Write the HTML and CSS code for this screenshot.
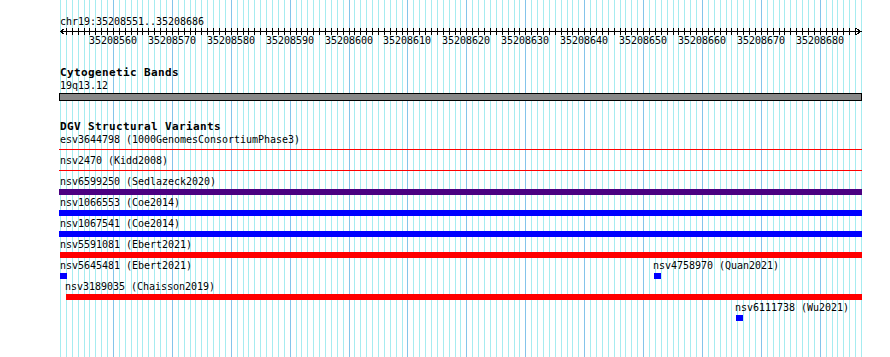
FILE: index.html
```html
<!DOCTYPE html>
<html>
<head>
<meta charset="utf-8">
<link rel="stylesheet" href="styles.css">
</head>
<body>
<div class="page">
  <svg class="guides" width="890" height="357">
    <path class="light" d="M60.5 0v357M66.5 0v357M72.5 0v357M78.5 0v357M84.5 0v357M89.5 0v357M95.5 0v357M101.5 0v357M107.5 0v357M119.5 0v357M125.5 0v357M131.5 0v357M137.5 0v357M142.5 0v357M148.5 0v357M154.5 0v357M160.5 0v357M166.5 0v357M178.5 0v357M184.5 0v357M190.5 0v357M195.5 0v357M201.5 0v357M207.5 0v357M213.5 0v357M219.5 0v357M225.5 0v357M237.5 0v357M243.5 0v357M248.5 0v357M254.5 0v357M260.5 0v357M266.5 0v357M272.5 0v357M278.5 0v357M284.5 0v357M296.5 0v357M301.5 0v357M307.5 0v357M313.5 0v357M319.5 0v357M325.5 0v357M331.5 0v357M337.5 0v357M343.5 0v357M354.5 0v357M360.5 0v357M366.5 0v357M372.5 0v357M378.5 0v357M384.5 0v357M390.5 0v357M396.5 0v357M402.5 0v357M413.5 0v357M419.5 0v357M425.5 0v357M431.5 0v357M437.5 0v357M443.5 0v357M449.5 0v357M455.5 0v357M460.5 0v357M472.5 0v357M478.5 0v357M484.5 0v357M490.5 0v357M496.5 0v357M502.5 0v357M508.5 0v357M514.5 0v357M519.5 0v357M531.5 0v357M537.5 0v357M543.5 0v357M549.5 0v357M555.5 0v357M561.5 0v357M567.5 0v357M572.5 0v357M578.5 0v357M590.5 0v357M596.5 0v357M602.5 0v357M608.5 0v357M614.5 0v357M620.5 0v357M625.5 0v357M631.5 0v357M637.5 0v357M649.5 0v357M655.5 0v357M661.5 0v357M667.5 0v357M673.5 0v357M678.5 0v357M684.5 0v357M690.5 0v357M696.5 0v357M708.5 0v357M714.5 0v357M720.5 0v357M726.5 0v357M731.5 0v357M737.5 0v357M743.5 0v357M749.5 0v357M755.5 0v357M767.5 0v357M773.5 0v357M779.5 0v357M784.5 0v357M790.5 0v357M796.5 0v357M802.5 0v357M808.5 0v357M814.5 0v357M826.5 0v357M832.5 0v357M837.5 0v357M843.5 0v357M849.5 0v357M855.5 0v357M861.5 0v357"/>
    <path class="dark" d="M113.5 0v357M172.5 0v357M231.5 0v357M290.5 0v357M349.5 0v357M407.5 0v357M466.5 0v357M525.5 0v357M584.5 0v357M643.5 0v357M702.5 0v357M761.5 0v357M820.5 0v357"/>
  </svg>

  <div class="content">
    <div class="pos">chr19:35208551..35208686</div>
    <svg class="axis" width="802" height="7">
      <path class="ax" d="M0 3.5H802"/>
      <path class="ax" d="M6.5 0v7M12.5 0v7M18.5 0v7M24.5 0v7M29.5 0v7M35.5 0v7M41.5 0v7M47.5 0v7M53.5 0v7M59.5 0v7M65.5 0v7M71.5 0v7M77.5 0v7M82.5 0v7M88.5 0v7M94.5 0v7M100.5 0v7M106.5 0v7M112.5 0v7M118.5 0v7M124.5 0v7M130.5 0v7M135.5 0v7M141.5 0v7M147.5 0v7M153.5 0v7M159.5 0v7M165.5 0v7M171.5 0v7M177.5 0v7M183.5 0v7M188.5 0v7M194.5 0v7M200.5 0v7M206.5 0v7M212.5 0v7M218.5 0v7M224.5 0v7M230.5 0v7M236.5 0v7M241.5 0v7M247.5 0v7M253.5 0v7M259.5 0v7M265.5 0v7M271.5 0v7M277.5 0v7M283.5 0v7M289.5 0v7M294.5 0v7M300.5 0v7M306.5 0v7M312.5 0v7M318.5 0v7M324.5 0v7M330.5 0v7M336.5 0v7M342.5 0v7M347.5 0v7M353.5 0v7M359.5 0v7M365.5 0v7M371.5 0v7M377.5 0v7M383.5 0v7M389.5 0v7M395.5 0v7M400.5 0v7M406.5 0v7M412.5 0v7M418.5 0v7M424.5 0v7M430.5 0v7M436.5 0v7M442.5 0v7M448.5 0v7M454.5 0v7M459.5 0v7M465.5 0v7M471.5 0v7M477.5 0v7M483.5 0v7M489.5 0v7M495.5 0v7M501.5 0v7M507.5 0v7M512.5 0v7M518.5 0v7M524.5 0v7M530.5 0v7M536.5 0v7M542.5 0v7M548.5 0v7M554.5 0v7M560.5 0v7M565.5 0v7M571.5 0v7M577.5 0v7M583.5 0v7M589.5 0v7M595.5 0v7M601.5 0v7M607.5 0v7M613.5 0v7M618.5 0v7M624.5 0v7M630.5 0v7M636.5 0v7M642.5 0v7M648.5 0v7M654.5 0v7M660.5 0v7M666.5 0v7M671.5 0v7M677.5 0v7M683.5 0v7M689.5 0v7M695.5 0v7M701.5 0v7M707.5 0v7M713.5 0v7M719.5 0v7M724.5 0v7M730.5 0v7M736.5 0v7M742.5 0v7M748.5 0v7M754.5 0v7M760.5 0v7M766.5 0v7M772.5 0v7M777.5 0v7M783.5 0v7M789.5 0v7M795.5 0v7"/>
      <path class="arrow" d="M4.5 0.5L0.5 3.5L4.5 6.5M796.5 0.5L800.5 3.5L796.5 6.5"/>
    </svg>
    <div class="scale">
      <span class="num" style="left:53px">35208560</span>
      <span class="num" style="left:112px">35208570</span>
      <span class="num" style="left:171px">35208580</span>
      <span class="num" style="left:230px">35208590</span>
      <span class="num" style="left:289px">35208600</span>
      <span class="num" style="left:347px">35208610</span>
      <span class="num" style="left:406px">35208620</span>
      <span class="num" style="left:465px">35208630</span>
      <span class="num" style="left:524px">35208640</span>
      <span class="num" style="left:583px">35208650</span>
      <span class="num" style="left:642px">35208660</span>
      <span class="num" style="left:701px">35208670</span>
      <span class="num" style="left:760px">35208680</span>
    </div>

    <div class="section">
      <div class="title">Cytogenetic Bands</div>
      <div class="name">19q13.12</div>
      <div class="band"></div>
    </div>

    <div class="section">
      <div class="title">DGV Structural Variants</div>

      <div class="row">
        <div class="feat">
          <div class="name">esv3644798 (1000GenomesConsortiumPhase3)</div>
          <div class="slot"><div class="thin red full"></div></div>
        </div>
      </div>
      <div class="row">
        <div class="feat">
          <div class="name">nsv2470 (Kidd2008)</div>
          <div class="slot"><div class="thin red full"></div></div>
        </div>
      </div>
      <div class="row">
        <div class="feat">
          <div class="name">nsv6599250 (Sedlazeck2020)</div>
          <div class="slot"><div class="bar purple full"></div></div>
        </div>
      </div>
      <div class="row">
        <div class="feat">
          <div class="name">nsv1066553 (Coe2014)</div>
          <div class="slot"><div class="bar blue full"></div></div>
        </div>
      </div>
      <div class="row">
        <div class="feat">
          <div class="name">nsv1067541 (Coe2014)</div>
          <div class="slot"><div class="bar blue full"></div></div>
        </div>
      </div>
      <div class="row">
        <div class="feat">
          <div class="name">nsv5591081 (Ebert2021)</div>
          <div class="slot"><div class="bar red" style="width:802px"></div></div>
        </div>
      </div>
      <div class="row">
        <div class="feat">
          <div class="name">nsv5645481 (Ebert2021)</div>
          <div class="slot"><div class="bar blue dot"></div></div>
        </div>
        <div class="feat">
          <div class="name" style="margin-left:593px">nsv4758970 (Quan2021)</div>
          <div class="slot"><div class="bar blue dot" style="margin-left:594px"></div></div>
        </div>
      </div>
      <div class="row">
        <div class="feat">
          <div class="name" style="margin-left:5px">nsv3189035 (Chaisson2019)</div>
          <div class="slot"><div class="bar red" style="margin-left:6px;width:796px"></div></div>
        </div>
      </div>
      <div class="row">
        <div class="feat">
          <div class="name" style="margin-left:675px">nsv6111738 (Wu2021)</div>
          <div class="slot"><div class="bar blue dot" style="margin-left:676px"></div></div>
        </div>
      </div>
    </div>
  </div>
</div>
</body>
</html>
```

FILE: styles.css
```css
html, body {
  margin: 0;
  padding: 0;
  background: #ffffff;
}

body {
  width: 890px;
  height: 357px;
  overflow: hidden;
  font-family: "DejaVu Sans Mono", "Liberation Mono", monospace;
  font-size: 10px;
  letter-spacing: -0.02px;
  color: #000000;
}

.page {
  position: relative;
  width: 890px;
  height: 357px;
}

.guides {
  position: absolute;
  left: 0;
  top: 0;
  display: block;
}

.guides path {
  fill: none;
  stroke-width: 1;
  shape-rendering: crispEdges;
}

.guides .light {
  stroke: #a6ecf0;
}

.guides .dark {
  stroke: #84c4ea;
}

.content {
  position: relative;
  padding: 16px 0 0 60px;
  width: 802px;
}

.pos {
  height: 12px;
  line-height: 12px;
  white-space: pre;
}

.axis {
  display: block;
  overflow: visible;
}

.axis .ax,
.axis .arrow {
  fill: none;
  stroke: #000000;
  stroke-width: 1;
  shape-rendering: crispEdges;
}

.scale {
  position: relative;
  height: 12px;
  line-height: 11px;
}

.num {
  position: absolute;
  top: 0;
  width: 48px;
  margin-left: -24px;
  text-align: center;
  white-space: pre;
}

.section {
  margin-top: 20px;
  display: flex;
  flex-direction: column;
}

.title {
  height: 13px;
  line-height: 12px;
  font-size: 11px;
  font-weight: bold;
  letter-spacing: 0.38px;
  white-space: pre;
}

.name {
  height: 13px;
  line-height: 12px;
  white-space: pre;
}

.band {
  margin-left: -1px;
  width: 801px;
  height: 6px;
  border: 1px solid #000000;
  background: #888888;
}

.row {
  display: grid;
  height: 21px;
}

.feat {
  grid-area: 1 / 1;
  display: flex;
  flex-direction: column;
}

.slot {
  height: 6px;
}

.thin {
  height: 1px;
  margin-top: 2px;
}

.bar {
  height: 6px;
}

.full {
  margin-left: -1px;
  width: 803px;
}

.dot {
  width: 7px;
}

.red {
  background: #ff0000;
}

.blue {
  background: #0000ff;
}

.purple {
  background: #4b0082;
}
```
